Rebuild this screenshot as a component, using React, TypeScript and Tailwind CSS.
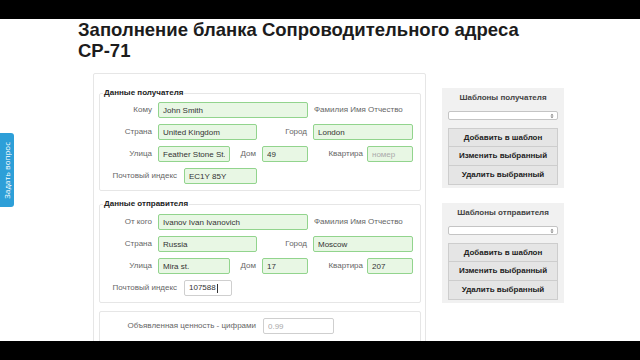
import React from "react";

const font = { fontFamily: '"Liberation Sans", Arial, sans-serif' };

function Field({ w, value, placeholder, plain }: { w: string; value?: string; placeholder?: string; plain?: boolean }) {
  const base =
    "h-[16px] rounded-[2px] border px-[4px] text-[8px] leading-[14px] text-[#333] outline-none placeholder:text-[#aaa] ";
  const color = plain ? "border-[#cfcfcf] bg-white " : "border-[#92d48d] bg-[#e8f7e4] ";
  return <input readOnly className={base + color + w} defaultValue={value} placeholder={placeholder} />;
}

function Label({ w, children }: { w: string; children: React.ReactNode }) {
  return <div className={"shrink-0 text-right text-[8px] leading-[10px] text-[#666] " + w}>{children}</div>;
}

function PersonFieldset({
  legend,
  who,
  whoLabel,
  country,
  city,
  street,
  house,
  flat,
  zip,
  top,
}: {
  legend: string;
  who: string;
  whoLabel: string;
  country: string;
  city: string;
  street: string;
  house: string;
  flat?: string;
  zip: string;
  top: string;
}) {
  return (
    <fieldset className="rounded-[2px] border border-[#e6e6e6] pb-[6px]">
      <legend className="ml-[3px] px-[1px] text-[8px] font-bold leading-[10px] text-[#222]">{legend}</legend>
      <div className={"flex flex-col gap-[6px] " + top}>
        <div className="flex items-center">
          <Label w="w-[52px]">{whoLabel}</Label>
          <div className="ml-[6px] flex">
            <Field w="w-[150px]" value={who} />
          </div>
          <div className="ml-[6px] text-[8px] leading-[10px] text-[#666]">Фамилия Имя Отчество</div>
        </div>
        <div className="flex items-center">
          <Label w="w-[52px]">Страна</Label>
          <div className="ml-[6px] flex">
            <Field w="w-[99px]" value={country} />
          </div>
          <Label w="w-[50px]">Город</Label>
          <div className="ml-[6px] flex">
            <Field w="w-[100px]" value={city} />
          </div>
        </div>
        <div className="flex items-center">
          <Label w="w-[52px]">Улица</Label>
          <div className="ml-[6px] flex">
            <Field w="w-[72px]" value={street} />
          </div>
          <Label w="w-[26px]">Дом</Label>
          <div className="ml-[6px] flex">
            <Field w="w-[46px]" value={house} />
          </div>
          <Label w="w-[55px]">Квартира</Label>
          <div className="ml-[4px] flex">
            <Field w="w-[46px]" value={flat} placeholder="номер" />
          </div>
        </div>
        <div className="flex items-center">
          <Label w="w-[77px]">Почтовый индекс</Label>
          <div className="ml-[7px] flex">
            {zip === "107588" ? (
              <div className="flex h-[16px] w-[48px] items-center rounded-[2px] border border-[#cfcfcf] bg-white px-[4px] text-[8px] leading-[10px] text-[#333]">
                <span>107588</span>
                <span className="ml-[1px] h-[9px] w-px bg-[#333]" />
              </div>
            ) : (
              <Field w="w-[73px]" value={zip} />
            )}
          </div>
        </div>
      </div>
    </fieldset>
  );
}

function TemplateBox({ title }: { title: string }) {
  return (
    <div className="flex flex-col bg-[#f1f1f1] px-[6px] pb-[3px] pt-[5px]">
      <div className="text-center text-[8px] font-bold leading-[10px] text-[#444]">{title}</div>
      <div className="mt-[8px] flex h-[9px] items-center justify-end rounded-[2px] border border-[#c4c4c4] bg-white pr-[3px]">
        <svg width="4" height="6" viewBox="0 0 4 6">
          <path d="M0.5 2.4 L2 0.8 L3.5 2.4 Z M0.5 3.6 L2 5.2 L3.5 3.6 Z" fill="#777" />
        </svg>
      </div>
      <div className="mt-[8px] flex w-[110px] flex-col">
        {["Добавить в шаблон", "Изменить выбранный", "Удалить выбранный"].map((t, i) => (
          <div
            key={t}
            className={
              "flex h-[19px] items-center justify-center border border-[#cdcdcd] bg-[#e5e5e5] text-[8px] font-bold text-[#222] " +
              (i > 0 ? "border-t-0" : "")
            }
          >
            {t}
          </div>
        ))}
      </div>
    </div>
  );
}

export default function App() {
  return (
    <div className="relative flex h-[360px] w-[640px] flex-col overflow-hidden bg-white" style={font}>
      <div className="h-[19px] shrink-0 bg-black" />
      <div className="h-[322px] shrink-0 overflow-hidden">
        <h1 className="ml-[78px] text-[18.5px] font-bold leading-[21px] text-[#1c1c1c]">
          Заполнение бланка Сопроводительного адреса
          <br />
          CP-71
        </h1>
        <div className="ml-[93px] mt-[12px] flex items-start gap-[16px]">
          <div className="flex h-[300px] w-[333px] shrink-0 flex-col rounded-[2px] border border-[#e6e6e6] pl-[5px] pr-[4px] pt-[14px]">
            <PersonFieldset
              legend="Данные получателя"
              whoLabel="Кому"
              who="John Smith"
              country="United Kingdom"
              city="London"
              street="Feather Stone St."
              house="49"
              zip="EC1Y 85Y"
              top="pt-[4px]"
            />
            <div className="h-[8px]" />
            <PersonFieldset
              legend="Данные отправителя"
              whoLabel="От кого"
              who="Ivanov Ivan Ivanovich"
              country="Russia"
              city="Moscow"
              street="Mira st."
              house="17"
              flat="207"
              zip="107588"
              top="pt-[5px]"
            />
            <div className="mt-[8px] flex h-[40px] items-start rounded-[2px] border border-[#e6e6e6] pt-[6px]">
              <div className="flex items-center">
                <Label w="w-[156px]">Объявленная ценность - цифрами</Label>
                <div className="ml-[7px] flex">
                  <Field w="w-[71px]" placeholder="0.99" plain />
                </div>
              </div>
            </div>
          </div>
          <div className="mt-[15px] flex w-[122px] flex-col gap-[15px]">
            <TemplateBox title="Шаблоны получателя" />
            <TemplateBox title="Шаблоны отправителя" />
          </div>
        </div>
      </div>
      <div className="h-[19px] shrink-0 bg-black" />
      <div className="absolute left-0 top-[133px] flex h-[74px] w-[14px] items-center justify-center rounded-r-[3px] bg-[#2d9fd8]">
        <span
          className="rotate-180 text-[8px] leading-[10px] text-white [writing-mode:vertical-rl]"
          style={{ fontFamily: '"Open Sans", "Liberation Sans", sans-serif' }}
        >
          Задать вопрос
        </span>
      </div>
    </div>
  );
}
